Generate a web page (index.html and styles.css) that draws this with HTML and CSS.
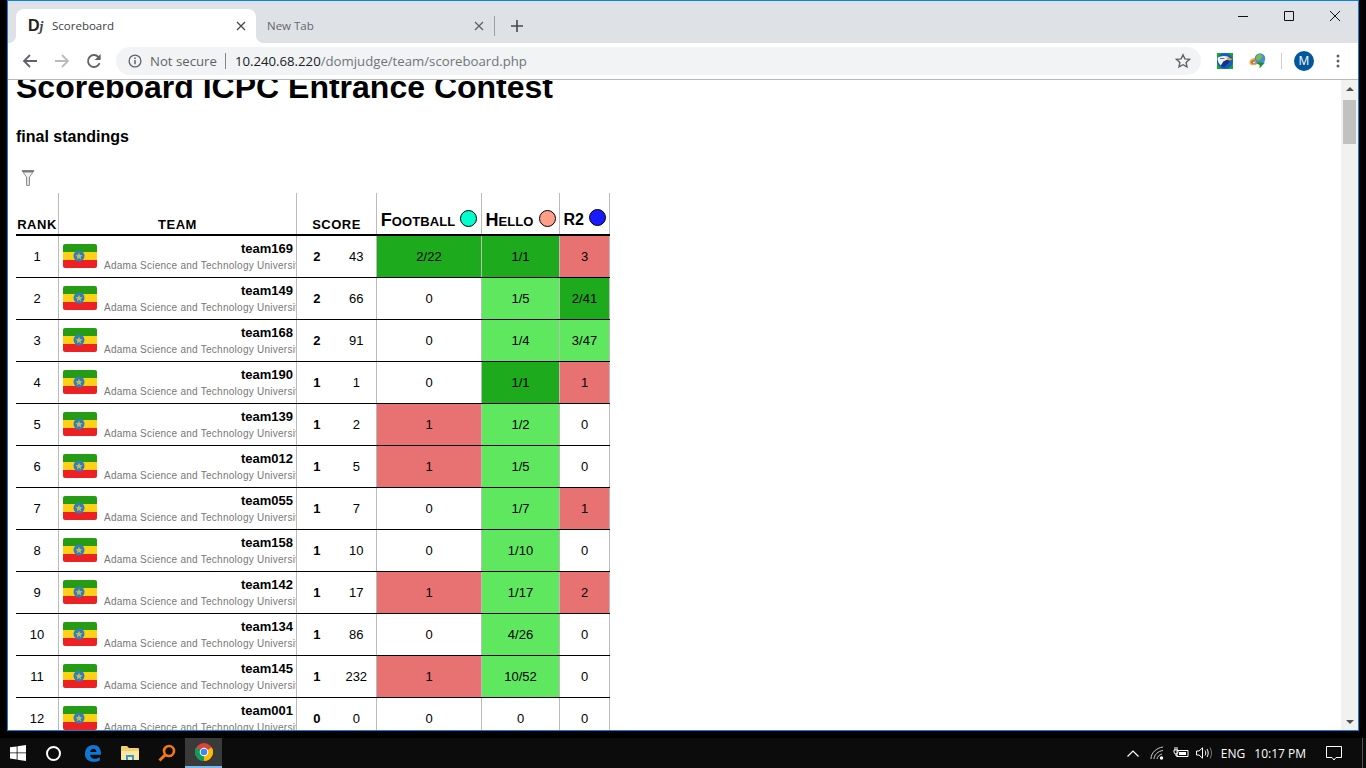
FILE: index.html
```html
<!DOCTYPE html>
<html>
<head>
	<title>Scoreboard</title>
	<link rel="stylesheet" href="styles.css">
</head>
<body>
	<div class="window">
		<div class="tabstrip">
			<div class="tab active">
				<span class="favicon">D<i>j</i></span>
				<span class="tab-title">Scoreboard</span>
				<svg class="tab-close" width="10" height="10" viewBox="0 0 10 10"><path d="M1 1l8 8M9 1l-8 8" stroke="#45484c" stroke-width="1.3"/></svg>
			</div>
			<div class="tab">
				<span class="tab-title muted">New Tab</span>
				<svg class="tab-close" width="10" height="10" viewBox="0 0 10 10"><path d="M1 1l8 8M9 1l-8 8" stroke="#5f6368" stroke-width="1.3"/></svg>
			</div>
			<div class="tab-sep"></div>
			<svg class="new-tab" width="12" height="12" viewBox="0 0 12 12"><path d="M6 0v12M0 6h12" stroke="#45484c" stroke-width="1.6"/></svg>
			<div class="win-buttons">
				<div class="win-btn"><svg width="12" height="12" viewBox="0 0 12 12"><path d="M1 6.500h10" stroke="#111" stroke-width="1"/></svg></div>
				<div class="win-btn"><svg width="12" height="12" viewBox="0 0 12 12"><path d="M1.500 1.500h9v9h-9z" fill="none" stroke="#111" stroke-width="1"/></svg></div>
				<div class="win-btn"><svg width="12" height="12" viewBox="0 0 12 12"><path d="M1 1l10 10M11 1L1 11" stroke="#111" stroke-width="1"/></svg></div>
			</div>
		</div>
		<div class="toolbar">
			<svg class="nav" width="16" height="16" viewBox="0 0 16 16"><path d="M15 8H2M8 2L2 8l6 6" fill="none" stroke="#5f6368" stroke-width="1.8"/></svg>
			<svg class="nav" width="16" height="16" viewBox="0 0 16 16"><path d="M1 8h13M8 2l6 6-6 6" fill="none" stroke="#b9bbbe" stroke-width="1.8"/></svg>
			<svg class="nav" width="16" height="16" viewBox="0 0 16 16"><path d="M13.600 10.200A6 6 0 1 1 12.300 3.800L14 5.500" fill="none" stroke="#5f6368" stroke-width="1.8"/><path d="M14.600 1v6h-6z" fill="#5f6368"/></svg>
			<div class="omnibox">
				<svg width="14" height="14" viewBox="0 0 14 14"><circle cx="7" cy="7" r="5.900" fill="none" stroke="#5f6368" stroke-width="1.3"/><path d="M7 6v4.200M7 3.400v1.500" stroke="#5f6368" stroke-width="1.5"/></svg>
				<span class="not-secure">Not secure</span>
				<span class="omni-sep"></span>
				<span class="url"><b>10.240.68.220</b>/domjudge/team/scoreboard.php</span>
				<svg class="star" width="16" height="16" viewBox="0 0 16 16"><path d="M8 1.800l1.900 4.100 4.500.5-3.300 3 .9 4.500-4-2.200-4 2.200.9-4.500-3.300-3 4.500-.5z" fill="none" stroke="#5f6368" stroke-width="1.4"/></svg>
			</div>
			<svg class="ext first" width="16" height="16" viewBox="0 0 16 16">
				<circle cx="8" cy="8" r="8" fill="#0f62c4"/>
				<path d="M.6 5C3 3.200 7 2.500 10.500 3.600L13 5.500 9.500 7 6.500 8.500 4 12.500C1.800 11 .4 8 .6 5z" fill="#f1f4fa"/>
				<path d="M4 12.500L6.500 8.500 9.500 7 13.500 7.500 11 10.500 7 14.500C6 14.200 5 13.500 4 12.500z" fill="#1b2f86"/>
				<path d="M9.500 4.300L15.800 6 12.800 7.800 10 6.500z" fill="#f2a024"/>
				<path d="M3 5.500h4.500" stroke="#3a4f9c" stroke-width=".8"/>
			</svg>
			<svg class="ext" width="17" height="16" viewBox="0 0 17 16">
				<path d="M.5 9.500C.5 6.500 3 5 6 5l1.500 7H6C3 12.500.5 12 .5 9.500z" fill="#e6b13a"/>
				<path d="M2 9.500C2 8 3.500 7 6 7l.5 3.500C4 10.800 2 11 2 9.500z" fill="#d9503f"/>
				<path d="M3.500 9.500C3.500 9 5 8.500 6.500 8.500l.2 1.500C5 10.300 3.500 10.300 3.500 9.500z" fill="#e8eef2"/>
				<circle cx="11" cy="5.500" r="5.300" fill="#4a8fd6"/>
				<path d="M7.500 3C9 .8 11.500.8 13 2.500c.8 1 .3 2.500-1 3-1.200.5-1.300 2-3 2C7.500 7.500 6.500 5 7.500 3z" fill="#7cbb45"/>
				<path d="M5 9.500h11l-5.500 6 .2-3.500z" fill="#1f8f2e"/>
			</svg>
			<div class="toolbar-sep"></div>
			<div class="avatar">M</div>
			<svg class="menu" width="4" height="14" viewBox="0 0 4 14"><circle cx="2" cy="2" r="1.500" fill="#5f6368"/><circle cx="2" cy="7" r="1.500" fill="#5f6368"/><circle cx="2" cy="12" r="1.500" fill="#5f6368"/></svg>
		</div>
		<div class="viewport">
			<div class="page">
				<h1>Scoreboard ICPC Entrance Contest</h1>
				<h2>final standings</h2>
				<svg class="filter" width="14" height="18" viewBox="0 0 14 18">
					<path d="M1 1.500h12L8.500 8v8.500H5.500V8z" fill="#f4f4f4" stroke="#8f8f8f"/>
					<path d="M1 1.500h12L11.500 3.500h-9z" fill="#777"/>
					<path d="M7 8v8" stroke="#ccc"/>
				</svg>
				<table class="scoreboard">
					<colgroup>
						<col class="c-rank"><col class="c-team"><col class="c-solved"><col class="c-time"><col class="c-p1"><col class="c-p2"><col class="c-p3">
					</colgroup>
					<thead>
						<tr>
							<th>rank</th>
							<th>team</th>
							<th colspan="2">score</th>
							<th class="prob">Football <span class="ball ball-a"></span></th>
							<th class="prob">Hello <span class="ball ball-b"></span></th>
							<th class="prob">R2 <span class="ball ball-c"></span></th>
						</tr>
					</thead>
					<tbody id="rows"></tbody>
				</table>
			</div>
			<div class="scrollbar">
				<div class="arrow up"></div>
				<div class="thumb-track"><div class="thumb"></div></div>
				<div class="arrow down"></div>
			</div>
		</div>
	</div>
	<div class="taskbar">
		<svg class="start" width="16" height="16" viewBox="0 0 16 16"><path d="M0 2.300l6.700-.9v6.100H0zM7.500 1.300L16 0v7.500H7.500zM0 8.300h6.700v6.200L0 13.600zM7.500 8.300H16V16l-8.500-1.200z" fill="#fff"/></svg>
		<div class="cortana"></div>
		<div class="task"><svg width="18" height="18" viewBox="0 0 18 18"><path d="M1 10C1 4 5 1 9.500 1 14 1 17 4.200 17 9.500v1.300H6c.3 2.700 2.300 3.900 4.800 3.900 2 0 3.700-.6 5-1.500v3.300c-1.500.9-3.500 1.300-5.600 1.300C4.500 18 1 15 1 10zm5-2h6.500c0-2-1.200-3.300-3-3.300S6.400 6 6 8z" fill="#0f78d4"/></svg></div>
		<div class="task"><svg width="18" height="16" viewBox="0 0 18 16"><path d="M0 2a1 1 0 0 1 1-1h5l2 2h9a1 1 0 0 1 1 1v10a1 1 0 0 1-1 1H1a1 1 0 0 1-1-1z" fill="#f4d06f"/><path d="M0 6h18v8a1 1 0 0 1-1 1H1a1 1 0 0 1-1-1z" fill="#fbe6a2"/><path d="M5 15v-5h8v5h-2v-3H7v3z" fill="#2c9fd8"/></svg></div>
		<div class="task"><svg width="18" height="18" viewBox="0 0 18 18"><circle cx="11" cy="7" r="5" fill="none" stroke="#f07818" stroke-width="2.600"/><path d="M7 11l-5.500 5.500" stroke="#f07818" stroke-width="3"/></svg></div>
		<div class="task active"><svg width="18" height="18" viewBox="0 0 18 18"><circle cx="9" cy="9" r="9" fill="#db4437"/><path d="M9 9L1.200 4.500A9 9 0 0 0 9 18z" fill="#0f9d58"/><path d="M9 9l7.800-4.500A9 9 0 0 1 9 18z" fill="#fbbc05"/><circle cx="9" cy="9" r="4.300" fill="#fff"/><circle cx="9" cy="9" r="3.300" fill="#4285f4"/></svg></div>
		<div class="tray">
			<svg class="chevron" width="12" height="7" viewBox="0 0 12 7"><path d="M.5 6.500L6 1l5.500 5.500" fill="none" stroke="#fff" stroke-width="1.200"/></svg>
			<svg class="wifi" width="14" height="14" viewBox="0 0 14 14"><path d="M1 13C1 7 6 2 13 1M4 13C4 9 8 5 13 4.500M7 13C7 11 9.500 8.500 12 8" fill="none" stroke="#ccc" stroke-width="1"/><circle cx="11.500" cy="12" r="1.700" fill="#fff"/></svg>
			<svg class="battery" width="16" height="12" viewBox="0 0 16 12"><path d="M4 3.500h11v6H4z" fill="none" stroke="#fff"/><path d="M6 5h7v3H6z" fill="#fff"/><path d="M2 0v3M4 0v3M1 3h4v2a2 2 0 0 1-4 0zM3 7v2h2" fill="none" stroke="#fff"/></svg>
			<svg class="speaker" width="16" height="12" viewBox="0 0 16 12"><path d="M.5 4h2.500L6.500.8v10.400L3 8H.5z" fill="none" stroke="#fff"/><path d="M9 3.500c1 1.500 1 3.500 0 5M11 2c1.600 2.500 1.600 5.500 0 8" fill="none" stroke="#fff"/><path d="M14 .5c2 3.500 2 7.500 0 11" fill="none" stroke="#777"/></svg>
			<span class="tray-text lang">ENG</span>
			<span class="tray-text clock">10:17 PM</span>
			<svg class="notify" width="16" height="15" viewBox="0 0 16 15"><path d="M.5.500h15v11H10L8 14l-2-2.500H.5z" fill="none" stroke="#fff"/></svg>
			<div class="show-desktop"></div>
		</div>
	</div>
	<script src="rows.js"></script>
</body>
</html>
```

FILE: rows.js
```js
// team, solved, time, then football / hello / r2 as [text, colour class]
const standings = [
	["team169", 2, 43, ["2/22", "first"], ["1/1", "first"], ["3", "wrong"]],
	["team149", 2, 66, ["0", ""], ["1/5", "ok"], ["2/41", "first"]],
	["team168", 2, 91, ["0", ""], ["1/4", "ok"], ["3/47", "ok"]],
	["team190", 1, 1, ["0", ""], ["1/1", "first"], ["1", "wrong"]],
	["team139", 1, 2, ["1", "wrong"], ["1/2", "ok"], ["0", ""]],
	["team012", 1, 5, ["1", "wrong"], ["1/5", "ok"], ["0", ""]],
	["team055", 1, 7, ["0", ""], ["1/7", "ok"], ["1", "wrong"]],
	["team158", 1, 10, ["0", ""], ["1/10", "ok"], ["0", ""]],
	["team142", 1, 17, ["1", "wrong"], ["1/17", "ok"], ["2", "wrong"]],
	["team134", 1, 86, ["0", ""], ["4/26", "ok"], ["0", ""]],
	["team145", 1, 232, ["1", "wrong"], ["10/52", "ok"], ["0", ""]],
	["team001", 0, 0, ["0", ""], ["0", ""], ["0", ""]]
];

const flag = `<svg class="flag" width="34" height="24" viewBox="0 0 34 24">
	<path d="M2 0h30a2 2 0 0 1 2 2v6H0V2a2 2 0 0 1 2-2z" fill="#259c13"/>
	<path d="M0 8h34v8H0z" fill="#fcd116"/>
	<path d="M0 16h34v6a2 2 0 0 1-2 2H2a2 2 0 0 1-2-2z" fill="#ed2024"/>
	<circle cx="16" cy="12" r="5.500" fill="#2e7fc0"/>
	<path d="M16 8.500l1 2.500 2.500.2-1.900 1.700.6 2.600-2.200-1.400-2.200 1.400.6-2.600-1.900-1.700 2.500-.2z" fill="#c9b84a"/>
</svg>`;

let html = "";
standings.forEach(function (s, i) {
	html += `<tr>
		<td>${i + 1}</td>
		<td class="team">${flag}<div class="team-text"><div class="team-name">${s[0]}</div><div class="team-affil">Adama Science and Technology University</div></div></td>
		<td class="solved">${s[1]}</td>
		<td>${s[2]}</td>
		<td class="${s[3][1]}">${s[3][0]}</td>
		<td class="${s[4][1]}">${s[4][0]}</td>
		<td class="${s[5][1]}">${s[5][0]}</td>
	</tr>`;
});
document.getElementById("rows").innerHTML = html;
```

FILE: styles.css
```css
body{
	margin: 0;
	height: 768px;
	overflow: hidden;
	background: #000;
	font-family: "Liberation Sans", Arial, sans-serif;
}
.window{
	height: 729px;
	margin: 0 7px 0 7px;
	border: 1px solid #0a84d8;
	display: flex;
	flex-direction: column;
	background: #fff;
}
.tabstrip{
	height: 42px;
	background: #dee1e6;
	display: flex;
	align-items: flex-end;
	font-family: "Open Sans", sans-serif;
	font-size: 11.5px;
	padding-left: 8px;
}
.tab{
	width: 240px;
	height: 34px;
	box-sizing: border-box;
	display: flex;
	align-items: center;
	padding: 0 10px 0 12px;
	border-radius: 8px 8px 0 0;
	color: #3c4043;
	position: relative;
}
.tab + .tab{
	width: 236px;
	padding: 0 8px 0 11px;
}
.tab.active{
	background: #fff;
}
/* little flares where the active tab meets the toolbar */
.tab.active:before,
.tab.active:after{
	content: "";
	position: absolute;
	bottom: 0;
	width: 8px;
	height: 8px;
}
.tab.active:before{
	left: -8px;
	background: radial-gradient(circle at 0 0, #dee1e6 8px, #fff 8px);
}
.tab.active:after{
	right: -8px;
	background: radial-gradient(circle at 100% 0, #dee1e6 8px, #fff 8px);
}
.favicon{
	font-family: "Liberation Sans", sans-serif;
	font-weight: bold;
	font-size: 16px;
	width: 24px;
	color: #222;
}
.favicon i{
	font-family: "Liberation Serif", serif;
	color: #444;
	font-size: 14px;
}
.tab-title{
	flex: 1;
	padding-bottom: 2px;
}
.muted{
	color: #666;
}
.tab-sep{
	width: 1px;
	height: 20px;
	background: #9aa0a6;
	margin: 0 0 7px 2px;
}
.new-tab{
	margin: 0 0 11px 16px;
}
.win-buttons{
	display: flex;
	margin-left: auto;
	align-self: flex-start;
}
.win-btn{
	width: 46px;
	height: 30px;
	display: flex;
	align-items: center;
	justify-content: center;
}
.toolbar{
	height: 36px;
	border-bottom: 1px solid #b8b8b8;
	display: flex;
	align-items: center;
	font-family: "Open Sans", sans-serif;
	font-size: 13.2px;
	padding-left: 14px;
}
.nav{
	margin-right: 16px;
	flex: none;
}
.nav:nth-of-type(3){
	margin-right: 14px;
}
.omnibox{
	width: 1085px;
	height: 28px;
	box-sizing: border-box;
	background: #f1f3f4;
	border-radius: 14px;
	display: flex;
	align-items: center;
	padding: 0 10px 0 12px;
}
.not-secure{
	color: #5f6368;
	margin-left: 8px;
}
.omni-sep{
	width: 1px;
	height: 16px;
	background: #80868b;
	margin: 0 9px 0 8px;
}
.url{
	color: #70757a;
	flex: 1;
}
.url b{
	font-weight: normal;
	color: #202124;
}
.ext{
	flex: none;
}
.ext.first{
	margin-left: 16px;
}
.ext + .ext{
	margin-left: 16px;
}
.toolbar-sep{
	width: 1px;
	height: 16px;
	background: #ccc;
	margin: 0 12px 0 15px;
}
.avatar{
	width: 20px;
	height: 20px;
	border-radius: 50%;
	background: #01579b;
	color: #fff;
	font-size: 12px;
	text-align: center;
	line-height: 20px;
}
.menu{
	margin-left: 22px;
}
.viewport{
	flex: 1;
	min-height: 0;
	display: flex;
	overflow: hidden;
}
.page{
	flex: 1;
	min-width: 0;
	padding-left: 8px;
	overflow: hidden;
}
h1{
	font-size: 32px;
	line-height: 37px;
	margin: -11px 0 0 0;
}
h2{
	font-size: 16px;
	line-height: 18px;
	margin: 22px 0 0 0;
}
.filter{
	display: block;
	margin: 23px 0 0 5px;
}
.scoreboard{
	border-collapse: collapse;
	table-layout: fixed;
	width: 594px;
	margin-top: 6px;
	font-size: 13px;
	text-align: center;
}
.c-rank{ width: 42.5px; }
.c-team{ width: 238px; }
.c-solved{ width: 40px; }
.c-time{ width: 40px; }
.c-p1{ width: 105px; }
.c-p2{ width: 78px; }
.c-p3{ width: 50px; }
th{
	height: 37px;
	padding: 0;
	vertical-align: bottom;
	font-variant: small-caps;
	font-size: 18px;
	line-height: 20px;
	letter-spacing: .5px;
	border-bottom: 2px solid #000;
	border-left: 1px solid #bbb;
	border-right: 1px solid #bbb;
	padding-bottom: 1px;
}
th:first-child{
	border-left: none;
}
th.prob{
	padding-bottom: 4px;
	white-space: nowrap;
	letter-spacing: .1px;
}
th:last-child{
	font-size: 16px;
}
.ball{
	display: inline-block;
	width: 15px;
	height: 15px;
	border: 1px solid #000;
	border-radius: 50%;
	vertical-align: -1px;
}
.ball-a{ background: #00ffcc; }
.ball-b{ background: #ff9f8a; }
.ball-c{ background: #1a1aff; }
td{
	height: 41px;
	padding: 0;
	border-bottom: 1px solid #000;
	border-left: 1px solid #bbb;
	border-right: 1px solid #bbb;
}
td:first-child{
	border-left: none;
}
td.solved{
	font-weight: bold;
	border-right: none;
}
td.solved + td{
	border-left: none;
}
.flag{
	float: left;
	margin: 3px 0 0 4px;
}
td.team{
	text-align: right;
	white-space: nowrap;
	overflow: hidden;
}
.team-text{
	overflow: hidden;
	padding-left: 7px;
}
.team-name{
	font-weight: bold;
	font-size: 13px;
	line-height: 16px;
	padding-right: 3px;
	margin-bottom: 3px;
}
.team-affil{
	font-size: 10px;
	line-height: 12px;
	letter-spacing: .26px;
	color: #777;
	text-align: left;
	overflow: hidden;
}
.first{ background: #1daa1d; }
.ok{ background: #60e760; }
.wrong{ background: #e87272; }
.scrollbar{
	width: 17px;
	background: #f1f1f1;
	display: flex;
	flex-direction: column;
}
.arrow{
	height: 17px;
	display: flex;
	align-items: center;
	justify-content: center;
}
.arrow:before{
	content: "";
	border-left: 4px solid transparent;
	border-right: 4px solid transparent;
}
.up:before{
	border-bottom: 4px solid #505050;
}
.down:before{
	border-top: 4px solid #505050;
}
.thumb-track{
	flex: 1;
	padding: 3px 2px 0 2px;
}
.thumb{
	height: 44px;
	background: #c1c1c1;
}
.taskbar{
	height: 30px;
	margin-top: 7px;
	background: #0c0c0c;
	display: flex;
	align-items: center;
}
.start{
	margin-left: 10px;
}
.cortana{
	width: 11px;
	height: 11px;
	border: 2px solid #fff;
	border-radius: 50%;
	margin: 0 13px 0 20px;
}
.task{
	width: 37px;
	height: 30px;
	box-sizing: border-box;
	display: flex;
	align-items: center;
	justify-content: center;
}
.task.active{
	background: #3a3a3a;
	border-bottom: 2px solid #76b9ed;
}
.tray{
	margin-left: auto;
	display: flex;
	align-items: center;
	height: 30px;
	font-family: "Open Sans", sans-serif;
	font-size: 12px;
	color: #fff;
}
.wifi{
	margin-left: 11px;
}
.battery{
	margin-left: 9px;
}
.speaker{
	margin-left: 7px;
}
.lang{
	margin-left: 9px;
}
.clock{
	margin-left: 9px;
}
.notify{
	margin-left: 20px;
}
.show-desktop{
	width: 1px;
	height: 30px;
	background: #555;
	margin-left: 20px;
	margin-right: 3px;
}
```
